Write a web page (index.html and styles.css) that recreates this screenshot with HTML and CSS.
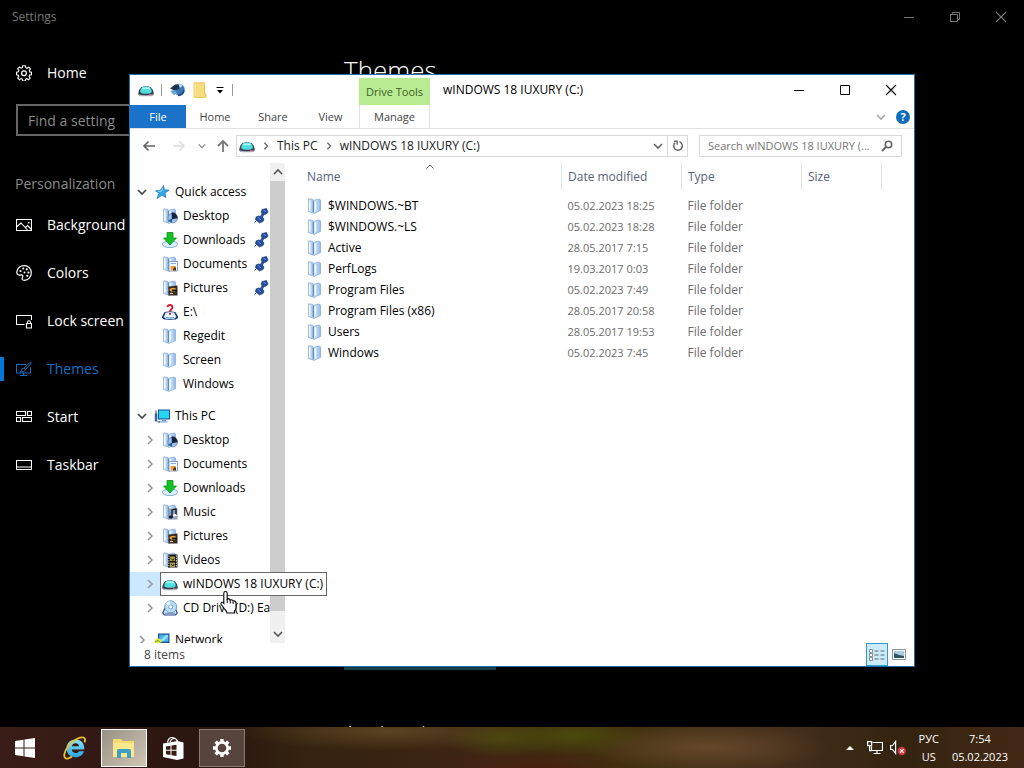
FILE: index.html
```html
<!DOCTYPE html>
<html lang="en">
<head>
  <meta charset="UTF-8" />
  <meta name="viewport" content="width=device-width, initial-scale=1" />
  <title>Settings</title>
  <link rel="stylesheet" href="styles.css">
</head>
<body>
  <!-- Shared icons -->
  <svg class="sprite" aria-hidden="true">
    <defs>
      <linearGradient id="folder-blue" x1="0" x2="1">
        <stop offset="0" stop-color="#e6f3fd" />
        <stop offset="1" stop-color="#8fbbe8" />
      </linearGradient>
      <linearGradient id="ie-blue" x1="0" y1="0" x2="0" y2="1">
        <stop offset="0" stop-color="#8be4fb" />
        <stop offset="1" stop-color="#27a4e0" />
      </linearGradient>
    </defs>
    <symbol id="folder" viewBox="0 0 16 16">
      <path d="M1.500.8l4 .5 1.500 1.500v12.500l-5.500-1.800z" fill="url(#folder-blue)" stroke="#7fa3cc" stroke-width=".7" />
      <path d="M6 2.500L12 1l1.500 1v10.500L7 15.300 6 14z" fill="url(#folder-blue)" stroke="#7ea4d2" stroke-width=".7" />
      <path d="M2.700 2.500v10M8.500 3.500v9" stroke="#fff" stroke-width="1.100" />
      <path d="M6.500 3v11" stroke="#5f8cc4" />
    </symbol>
    <symbol id="folder-desktop" viewBox="0 0 16 16">
      <use href="#folder" width="16" height="16" />
      <circle cx="10.700" cy="10" r="4.800" fill="#9cc4ea" stroke="#4f7db4" stroke-width=".8" />
      <path d="M9.500 4.500a5 5 0 0 1 5.800 5.800l-5.300 1z" fill="#17233d" />
      <path d="M6.500 12.500l3.500-2v4z" fill="#26508c" />
    </symbol>
    <symbol id="folder-docs" viewBox="0 0 16 16">
      <use href="#folder" width="16" height="16" />
      <path d="M7 5.500h8.500v9.500H7z" fill="#fff" stroke="#7d9cc6" stroke-width=".9" />
      <path d="M8.500 7.500h5.500" stroke="#8cadd8" />
      <path d="M8.500 10h5.500v4.500H8.500z" fill="#e8a24a" />
      <path d="M11 14.500l1-3.500 2 1v2.500z" fill="#4a2c1c" />
    </symbol>
    <symbol id="folder-pics" viewBox="0 0 16 16">
      <use href="#folder" width="16" height="16" />
      <path d="M6.500 6.500l9-1v10h-9z" fill="#3a2b20" />
      <path d="M7 10q3-4 7.500-1l-1.500 3h-3z" fill="#e4a43e" />
      <path d="M10 9.500h5v2h-5z" fill="#15100d" />
      <path d="M8 13.500h3" stroke="#f4dfb0" />
    </symbol>
    <symbol id="folder-music" viewBox="0 0 16 16">
      <use href="#folder" width="16" height="16" />
      <path d="M6.500 4.500h9v11h-9z" fill="#8da1bd" />
      <path d="M10 13V6l4-1.200V11" fill="none" stroke="#111a2c" stroke-width="1.300" />
      <ellipse cx="8.800" cy="13" rx="2" ry="1.500" fill="#111a2c" />
      <ellipse cx="12.900" cy="11.200" rx="1.700" ry="1.300" fill="#fff" />
    </symbol>
    <symbol id="folder-video" viewBox="0 0 16 16">
      <use href="#folder" width="16" height="16" />
      <path d="M6 2.500h9.500v13H6z" fill="#16160f" />
      <path d="M8 4.500h5V9H8zM8 10.500h5V15H8z" fill="#a79a52" />
      <path d="M9 6.500l2 2 1-2M9 12l2 2 1-2" stroke="#28301a" fill="none" />
      <path d="M6.900 3.500v12M14.400 3.500v12" stroke="#fff" stroke-width="1" stroke-dasharray="1.200 1.200" />
    </symbol>
    <symbol id="download" viewBox="0 0 16 16">
      <ellipse cx="8" cy="12.300" rx="7.600" ry="3.300" fill="#d8ecfb" stroke="#78a9da" stroke-width=".9" />
      <path d="M5 .5h6v5.500h3.500L8 13 1.500 6H5z" fill="#16c223" stroke="#0a8f1b" stroke-width=".8" />
    </symbol>
    <symbol id="unknown-drive" viewBox="0 0 16 16">
      <path d="M3 8.500Q8 6.500 13 8.500l2.500 4.500q-.5 2.500-7.500 2.500T.5 13z" fill="#e8f2fa" stroke="#33558c" stroke-width=".9" />
      <path d="M3 8.500L.6 13.500 3 15M13 8.500l2.400 5L13 15" fill="none" stroke="#123a86" stroke-width="1.600" />
      <path d="M4 13.500q4 1.300 8 0" fill="none" stroke="#4f8fbd" />
      <path d="M5.500 3.200Q5.800 1 8 1t2.500 2.300C10.500 5.200 8.200 5.300 8 7.600" fill="none" stroke="#d81c30" stroke-width="1.900" />
      <path d="M7 8.800h2v2H7z" fill="#d81c30" />
    </symbol>
    <symbol id="drive" viewBox="0 0 16 16">
      <path d="M3.500 5Q8 3.600 12.500 5q2.500 2 3.200 6v1.500l-2 1.500H2.300l-2-1.500V11Q1 7 3.500 5z" fill="#37424f" />
      <path d="M4 5.200Q8 3.800 12 5.200q1.800 2.300 1.800 5-1.500 1.600-5.800 1.600t-5.800-1.600q0-2.700 1.800-5z" fill="#4fdde0" />
      <path d="M4.600 5.800q3.400-1.200 6.800 0l.8 1.700q-4.200-1-8.400 0z" fill="#a5f6f4" />
      <path d="M.8 12.200q2 1 7.200 1t7.200-1l-1.500 2H2.300z" fill="#b5b0c2" />
      <path d="M11 12.800h2.500" stroke="#e07c80" />
    </symbol>
    <symbol id="cd-drive" viewBox="0 0 16 16">
      <path d="M3 8L.8 13l1.700 2h11l1.700-2L13 8z" fill="#dce7f4" stroke="#2b4c94" stroke-width="1.200" />
      <circle cx="8.700" cy="6.800" r="6" fill="#b8dcf4" stroke="#6796ca" stroke-width=".9" />
      <path d="M8.700 6.800L4 3.500A6 6 0 0 1 8 1z" fill="#edf8ff" />
      <circle cx="8.700" cy="6.800" r="2" fill="#fff" stroke="#6b9bce" stroke-width=".8" />
      <path d="M3 13.300h10" stroke="#6d86b0" />
    </symbol>
    <symbol id="star" viewBox="0 0 16 16">
      <path d="M9.500 1.500l.9 4.300 4.800.4-4.200 2.600.8 4.700-3.800-2.500L3 14.500l2-5.200-3.500-2.500 5-.6z" fill="#38a7e8" stroke="#1d7cc0" stroke-width=".8" />
      <path d="M8.600 4l-.8 3-3.800.3" fill="none" stroke="#9bd8f8" />
    </symbol>
    <symbol id="this-pc" viewBox="0 0 16 16">
      <path d="M4 1.500h12v10H4z" fill="#1b4d9b" />
      <path d="M5 2.500h10v8H5z" fill="#25d5f2" />
      <path d="M8 11.500h4v2H8z" fill="#6da4d2" />
      <path d="M5 13.900h8.500" stroke="#8fb4d9" stroke-width="1.400" />
      <path d="M.8 5.500h2.500v8H.8z" fill="#2e63ae" />
      <path d="M2 2.500v4M3.500 14h2.500" stroke="#203d79" />
    </symbol>
    <symbol id="network" viewBox="0 0 16 16">
      <path d="M4 1.500h11.500v9.500H4z" fill="#1c4e99" />
      <path d="M5.200 2.700h9.200v7H5.200z" fill="#45b8e8" />
      <path d="M6 8.500l6-5.500h2v2l-5 4.500z" fill="#91e1f8" />
      <path d="M8 11h4v3H8z" fill="#7396ba" />
      <circle cx="4" cy="10" r="3.500" fill="#e9e531" />
      <path d="M1 10q3-3 6 1" fill="none" stroke="#58a646" />
    </symbol>
    <symbol id="pin" viewBox="0 0 16 16">
      <path d="M9 1.500l4.500-1 1.500 3.500-1.500 2-2.500.5-1.500 2.500 1.500 2-1 2.500-3.500 1.500L2.500 11.500 3 9l2.500-1 2 .3L9 6l-.8-2z" fill="#214f9f" stroke="#17346f" stroke-width=".6" />
      <path d="M10.500 2.500l2.500 1M5 9.500l3 2.500" stroke="#6f9cde" />
      <path d="M4 12l-2.500 2.500" stroke="#33477a" />
    </symbol>
    <symbol id="chev" viewBox="0 0 10 10">
      <path d="M3 1l4 4-4 4" fill="none" stroke="currentColor" stroke-width="1.600" />
    </symbol>
    <symbol id="chev-down" viewBox="0 0 10 10">
      <path d="M1 3l4 4 4-4" fill="none" stroke="currentColor" stroke-width="1.600" />
    </symbol>
    <symbol id="min" viewBox="0 0 12 12"><path d="M1 6.500h10" stroke="currentColor" /></symbol>
    <symbol id="close" viewBox="0 0 12 12"><path d="M1 1l10 10M11 1L1 11" stroke="currentColor" stroke-width="1.100" /></symbol>
  </svg>

  <div class="desktop">
    <!-- Settings app -->
    <section class="settings" aria-label="Settings">
      <header class="settings-bar">
        <span>Settings</span>
        <div class="win-controls">
          <button type="button" aria-label="Minimize"><svg class="i12"><use href="#min" /></svg></button>
          <button type="button" aria-label="Restore"><svg class="i12" viewBox="0 0 12 12"><path d="M1.500 3.500h7v7h-7zM3.500 3V1.500h7v7H9" fill="none" stroke="currentColor" /></svg></button>
          <button type="button" aria-label="Close"><svg class="i12"><use href="#close" /></svg></button>
        </div>
      </header>
      <div class="settings-body">
        <nav class="settings-nav">
          <a href="#" class="nav-link">
            <svg class="i16" viewBox="0 0 16 16"><path d="M6.700.7h2.600l.4 2 1.300.6 1.800-1.200 1.600 1.800-1.100 1.700.5 1.300 1.700.3v2.500l-1.900.4-.5 1.300 1.100 1.700-1.800 1.600-1.600-1-1.200.5-.3 1.800H6.700l-.4-1.900-1.200-.5-1.700 1.100-1.700-1.700 1.100-1.700-.5-1.200-1.800-.4V7.100l1.900-.4.5-1.300-1.200-1.700 1.800-1.700 1.600 1.200 1.300-.5z" fill="none" stroke="currentColor" stroke-width="1.100" /><circle cx="8" cy="8.200" r="2.400" fill="none" stroke="currentColor" stroke-width="1.200" /></svg>
            Home
          </a>
          <input class="find" type="text" placeholder="Find a setting" aria-label="Find a setting" />
          <h2>Personalization</h2>
          <a href="#" class="nav-link">
            <svg class="i16" viewBox="0 0 16 16"><path d="M.5 2.500h15v11H.5zM.5 10l4.500-4 6.500 7M9.500 10.500l2-2 4 4" fill="none" stroke="currentColor" stroke-width="1.100" /><path d="M12 5h1.500v1.500H12z" fill="currentColor" /></svg>
            Background
          </a>
          <a href="#" class="nav-link">
            <svg class="i16" viewBox="0 0 16 16"><path d="M.8 7C1.500 3 4.500.6 8.300.6c4 0 7 3 7 7.200 0 4.300-3 7.500-7 7.500-2 0-2.600-1.300-1.900-2.700.9-1.800.2-3-1.300-2.700-2 .4-4.700.2-4.300-2.900z" fill="none" stroke="currentColor" stroke-width="1.200" /><g fill="currentColor"><circle cx="4.500" cy="6" r="1.100" /><circle cx="7.300" cy="3.500" r="1.100" /><circle cx="10.800" cy="4.300" r="1.100" /><circle cx="12.500" cy="7.500" r="1.100" /><circle cx="11.300" cy="10.800" r="1.100" /><circle cx="8.500" cy="7.500" r="1" /></g></svg>
            Colors
          </a>
          <a href="#" class="nav-link">
            <svg class="i16" viewBox="0 0 16 16"><path d="M8.500 11.500h-8v-9h15V7M10.500 10.500h5v4.500h-5zM11.500 10.500V9.300q0-1.600 1.500-1.600t1.500 1.600v1.200" fill="none" stroke="currentColor" stroke-width="1.100" /></svg>
            Lock screen
          </a>
          <a href="#" class="nav-link current" aria-current="page">
            <svg class="i16" viewBox="0 0 16 16"><path d="M10 3.500H.5v8.500h14V6.500M7.500 12v2.500M4 14.500h7" fill="none" stroke="currentColor" stroke-width="1.100" /><path d="M14.500 1l.9.9L9.500 8.500 8 7.300zM8 7.300q-2.400-.3-2.300 2Q5.500 10.500 4 10.500q4 1.300 5.500-2" fill="none" stroke="currentColor" /></svg>
            Themes
          </a>
          <a href="#" class="nav-link">
            <svg class="i16" viewBox="0 0 16 16"><path d="M.5 2.500h9v4h-9zM11.500 2.500h4v4h-4zM.5 8.500h4v4h-4zM6.500 8.500h9v4h-9z" fill="none" stroke="currentColor" stroke-width="1.100" /></svg>
            Start
          </a>
          <a href="#" class="nav-link">
            <svg class="i16" viewBox="0 0 16 16"><path d="M.5 3.500h15v9H.5zM.5 10h15" fill="none" stroke="currentColor" stroke-width="1.100" /></svg>
            Taskbar
          </a>
        </nav>
        <main class="settings-main">
          <h1>Themes</h1>
          <div class="theme-preview"></div>
          <h2>Apply a theme</h2>
        </main>
      </div>
    </section>

    <!-- File Explorer window -->
    <section class="explorer" aria-label="File Explorer">
      <header class="title-row">
        <div class="quick-bar">
          <svg class="i16"><use href="#drive" /></svg>
          <span class="sep"></span>
          <button type="button" aria-label="Properties"><svg class="i16" viewBox="0 0 16 16"><circle cx="10" cy="7.500" r="5.700" fill="#3a78b8" /><path d="M1 6.500L6 2.500l5 .5-1 4-4.500 1.500z" fill="#1c3350" /><path d="M1.500 9.500q2.500-2.500 5.500-.5l1 2.500-3 1.500z" fill="#68a8de" /><path d="M9.500 2.500q3-1 4 1L11 6z" fill="#c4e6f8" /><path d="M9 13.500q5-.5 6-5" fill="none" stroke="#16437e" stroke-width="1.500" /></svg></button>
          <button type="button" aria-label="New folder"><svg class="i16" viewBox="0 0 16 16"><path d="M2 .8h10.500v11H14v3.700H2z" fill="#f9dc7e" stroke="#e8bf50" stroke-width=".8" /><path d="M3.200 2v12" stroke="#fff0b4" /><path d="M12.500 4v8" stroke="#e9bd50" /></svg></button>
          <button type="button" aria-label="Customize toolbar"><svg class="i10" viewBox="0 0 10 10"><path d="M1.500 2.500h7" stroke="#000" /><path d="M2 5h6L5 8.500z" /></svg></button>
          <span class="sep"></span>
        </div>
        <div class="drive-tools">Drive Tools</div>
        <div class="window-title">wINDOWS 18 IUXURY (C:)</div>
        <div class="win-controls">
          <button type="button" aria-label="Minimize"><svg class="i12"><use href="#min" /></svg></button>
          <button type="button" aria-label="Maximize"><svg class="i12" viewBox="0 0 12 12"><path d="M1.500 1.500h9v9h-9z" fill="none" stroke="currentColor" /></svg></button>
          <button type="button" aria-label="Close"><svg class="i12"><use href="#close" /></svg></button>
        </div>
      </header>

      <div class="tab-row">
        <button type="button" class="file-tab">File</button>
        <button type="button">Home</button>
        <button type="button">Share</button>
        <button type="button">View</button>
        <button type="button" class="manage-tab">Manage</button>
        <div class="tab-end">
          <svg class="i10"><use href="#chev-down" /></svg>
          <button type="button" class="help" aria-label="Help">?</button>
        </div>
      </div>

      <div class="address-row">
        <div class="arrows">
          <button type="button" aria-label="Back"><svg class="i14" viewBox="0 0 14 14"><path d="M13 7H2M6.500 2.500L2 7l4.500 4.500" fill="none" stroke="#666" stroke-width="1.700" /></svg></button>
          <button type="button" aria-label="Forward"><svg class="i14" viewBox="0 0 14 14"><path d="M1 7h11M7.500 2.500L12 7l-4.500 4.500" fill="none" stroke="#dcdcdc" stroke-width="1.500" /></svg></button>
          <button type="button" aria-label="Recent locations"><svg class="i8"><use href="#chev-down" /></svg></button>
          <button type="button" aria-label="Up"><svg class="i14" viewBox="0 0 14 14"><path d="M7 13V2M2 7l5-5 5 5" fill="none" stroke="#777" stroke-width="1.800" /></svg></button>
        </div>
        <div class="address">
          <svg class="i16"><use href="#drive" /></svg>
          <svg class="i8"><use href="#chev" /></svg>
          <a href="#">This PC</a>
          <svg class="i8"><use href="#chev" /></svg>
          <a href="#">wINDOWS 18 IUXURY (C:)</a>
          <button type="button" class="drop" aria-label="Previous locations"><svg class="i10"><use href="#chev-down" /></svg></button>
          <button type="button" class="refresh" aria-label="Refresh"><svg class="i12" viewBox="0 0 12 12"><path d="M3 2.800A4.300 4.300 0 1 0 9 2.800L7.500 1.500" fill="none" stroke="#666" stroke-width="1.500" /><path d="M2 1.200h3.200v3.500" fill="none" stroke="#666" stroke-width="1.400" /></svg></button>
        </div>
        <label class="search">
          <input type="text" placeholder="Search wINDOWS 18 IUXURY (..." aria-label="Search" />
          <svg class="i12" viewBox="0 0 12 12"><circle cx="7.500" cy="4.500" r="3.200" fill="none" stroke="#666" stroke-width="1.600" /><path d="M5 7L1 11" stroke="#666" stroke-width="2" /></svg>
        </label>
      </div>

      <div class="explorer-body">
        <nav class="tree">
          <ul>
            <li class="root"><svg class="i10 open"><use href="#chev-down" /></svg><svg class="i16"><use href="#star" /></svg><a href="#">Quick access</a></li>
            <li><svg class="i16"><use href="#folder-desktop" /></svg><a href="#">Desktop</a><svg class="i16 pin"><use href="#pin" /></svg></li>
            <li><svg class="i16"><use href="#download" /></svg><a href="#">Downloads</a><svg class="i16 pin"><use href="#pin" /></svg></li>
            <li><svg class="i16"><use href="#folder-docs" /></svg><a href="#">Documents</a><svg class="i16 pin"><use href="#pin" /></svg></li>
            <li><svg class="i16"><use href="#folder-pics" /></svg><a href="#">Pictures</a><svg class="i16 pin"><use href="#pin" /></svg></li>
            <li><svg class="i16"><use href="#unknown-drive" /></svg><a href="#">E:\</a></li>
            <li><svg class="i16"><use href="#folder" /></svg><a href="#">Regedit</a></li>
            <li><svg class="i16"><use href="#folder" /></svg><a href="#">Screen</a></li>
            <li><svg class="i16"><use href="#folder" /></svg><a href="#">Windows</a></li>
          </ul>
          <ul>
            <li class="root"><svg class="i10 open"><use href="#chev-down" /></svg><svg class="i16"><use href="#this-pc" /></svg><a href="#">This PC</a></li>
            <li class="sub"><svg class="i10"><use href="#chev" /></svg><svg class="i16"><use href="#folder-desktop" /></svg><a href="#">Desktop</a></li>
            <li class="sub"><svg class="i10"><use href="#chev" /></svg><svg class="i16"><use href="#folder-docs" /></svg><a href="#">Documents</a></li>
            <li class="sub"><svg class="i10"><use href="#chev" /></svg><svg class="i16"><use href="#download" /></svg><a href="#">Downloads</a></li>
            <li class="sub"><svg class="i10"><use href="#chev" /></svg><svg class="i16"><use href="#folder-music" /></svg><a href="#">Music</a></li>
            <li class="sub"><svg class="i10"><use href="#chev" /></svg><svg class="i16"><use href="#folder-pics" /></svg><a href="#">Pictures</a></li>
            <li class="sub"><svg class="i10"><use href="#chev" /></svg><svg class="i16"><use href="#folder-video" /></svg><a href="#">Videos</a></li>
            <li class="sub hovered">
              <svg class="i10"><use href="#chev" /></svg>
              <div class="full-name">
                <svg class="i16"><use href="#drive" /></svg><a href="#">wINDOWS 18 IUXURY (C:)</a>
                <svg class="pointer" viewBox="0 0 18 24"><path d="M5.500 1.500q1.700 0 1.700 1.700v6q2.300-1 3 .8 2.200-.7 2.900 1 2.700-.5 2.900 1.800v4.700q0 2-1.500 3.500v2H7q-.5-2.200-2.500-4.200L1.200 14.500q-.7-1.700.7-2.200 1.200-.2 1.900 1V3.200q0-1.700 1.700-1.700z" fill="#fff" stroke="#000" stroke-width="1.100" /><path d="M7.200 9v4M10.200 10v3.500M13.100 11.500V14" stroke="#000" /></svg>
              </div>
            </li>
            <li class="sub"><svg class="i10"><use href="#chev" /></svg><svg class="i16"><use href="#cd-drive" /></svg><a href="#">CD Drive (D:) Easy</a></li>
          </ul>
          <ul>
            <li class="root"><svg class="i10"><use href="#chev" /></svg><svg class="i16"><use href="#network" /></svg><a href="#">Network</a></li>
          </ul>
        </nav>
        <div class="scrollbar">
          <button type="button" aria-label="Scroll up"><svg class="i10 up"><use href="#chev-down" /></svg></button>
          <div class="thumb"></div>
          <button type="button" aria-label="Scroll down"><svg class="i10"><use href="#chev-down" /></svg></button>
        </div>
        <div class="files">
          <table>
            <thead>
              <tr>
                <th class="col-name">Name<svg class="i8 sort" viewBox="0 0 8 8"><path d="M.5 5.500L4 2l3.500 3.500" fill="none" stroke="#555" /></svg></th>
                <th class="col-date">Date modified</th>
                <th class="col-type">Type</th>
                <th class="col-size">Size</th>
              </tr>
            </thead>
            <tbody>
              <tr><td><svg class="i16"><use href="#folder" /></svg>$WINDOWS.~BT</td><td class="date">05.02.2023 18:25</td><td>File folder</td><td></td></tr>
              <tr><td><svg class="i16"><use href="#folder" /></svg>$WINDOWS.~LS</td><td class="date">05.02.2023 18:28</td><td>File folder</td><td></td></tr>
              <tr><td><svg class="i16"><use href="#folder" /></svg>Active</td><td class="date">28.05.2017 7:15</td><td>File folder</td><td></td></tr>
              <tr><td><svg class="i16"><use href="#folder" /></svg>PerfLogs</td><td class="date">19.03.2017 0:03</td><td>File folder</td><td></td></tr>
              <tr><td><svg class="i16"><use href="#folder" /></svg>Program Files</td><td class="date">05.02.2023 7:49</td><td>File folder</td><td></td></tr>
              <tr><td><svg class="i16"><use href="#folder" /></svg>Program Files (x86)</td><td class="date">28.05.2017 20:58</td><td>File folder</td><td></td></tr>
              <tr><td><svg class="i16"><use href="#folder" /></svg>Users</td><td class="date">28.05.2017 19:53</td><td>File folder</td><td></td></tr>
              <tr><td><svg class="i16"><use href="#folder" /></svg>Windows</td><td class="date">05.02.2023 7:45</td><td>File folder</td><td></td></tr>
            </tbody>
          </table>
        </div>
      </div>

      <footer class="status">
        <span>8 items</span>
        <div class="views">
          <button type="button" class="on" aria-label="Details view"><svg class="i16" viewBox="0 0 16 16"><path d="M.5 2.500h3v3h-3zM.5 6.500h3v3h-3zM.5 10.500h3v3h-3z" fill="#fff" stroke="#7a8792" stroke-width=".9" /><path d="M5.500 4h4M11.500 4h4M5.500 8h4M11.500 8h4M5.500 12h4M11.500 12h4" stroke="#5d6b77" /></svg></button>
          <button type="button" aria-label="Large icons view"><svg class="i16" viewBox="0 0 16 16"><path d="M1.500 2.500h13v10h-13z" fill="#fff" stroke="#8496a4" /><path d="M3 4h10v7H3z" fill="#a9cbe3" /><path d="M3 6l5 2 5 1v2H3z" fill="#2f5561" /></svg></button>
        </div>
      </footer>
    </section>
  </div>

  <!-- Taskbar -->
  <footer class="taskbar">
    <div class="apps">
      <button type="button" aria-label="Start"><svg class="i22" viewBox="0 0 22 22"><path d="M1 4l8.500-1.200v7.700H1zM10.500 2.600L21 1v9.500H10.500zM1 11.500h8.500v7.700L1 18zM10.500 11.500H21V21l-10.500-1.500z" fill="#fff" /></svg></button>
      <button type="button" aria-label="Internet Explorer"><svg class="i24" viewBox="0 0 24 24"><path d="M12.500 3.500c-5.200 0-9 3.800-9 8.700 0 5.200 3.700 9 9 9 4.200 0 7.400-2.300 8.500-6h-5c-.7 1.200-1.800 1.900-3.300 1.900-2.200 0-3.800-1.400-3.900-3.600h12.500c.5-6-3.200-10-8.800-10zM8.900 10.300c.4-1.900 1.800-3 3.700-3s3.200 1.100 3.500 3z" fill="url(#ie-blue)" /><path d="M21.500 6.500c.9-2.800.6-4.500-1-5C16.500.5 9 5 5 10.500 1 16 0 21.500 3 22.500c1.500.5 3.800-.5 6-2" fill="none" stroke="#eac22d" stroke-width="1.800" /></svg></button>
      <button type="button" class="active" aria-label="File Explorer"><svg class="i24" viewBox="0 0 24 24"><path d="M1 3h8l2 2h11v16H1z" fill="#f2dc6d" /><path d="M1 7h21v14H1z" fill="#f9e98c" /><path d="M5 15q0-2 2-2h10q2 0 2 2v7h-4v-5H9v5H5z" fill="#3d9fc4" /></svg></button>
      <button type="button" aria-label="Store"><svg class="i24" viewBox="0 0 24 24"><path d="M6.500 6.500Q7.500 1.500 11 1.500T16 5M9 6q1.500-3.500 4-3.500T16.500 5" fill="none" stroke="#fff" stroke-width="1.200" /><path d="M2 7.500L16.500 5 22.500 6.500v16L16 24 2 21z" fill="#fff" /><path d="M5 10.500l4.500-.7v4H5zM10.500 9.600l5-.8v5h-5zM5 14.800h4.500v4.200L5 18.300zM10.500 14.800h5v5.200l-5-.8z" fill="#351c15" /></svg></button>
      <button type="button" class="running" aria-label="Settings"><svg class="i20" viewBox="0 0 20 20"><circle cx="10" cy="10" r="5.600" fill="none" stroke="#fff" stroke-width="2.600" /><path d="M10 1v3M10 16v3M1 10h3M16 10h3M3.600 3.600l2.200 2.200M14.200 14.200l2.200 2.200M16.400 3.600l-2.200 2.200M5.800 14.200l-2.200 2.200" stroke="#fff" stroke-width="3.400" /></svg></button>
    </div>
    <div class="tray">
      <button type="button" aria-label="Show hidden icons"><svg class="i8" viewBox="0 0 8 8"><path d="M0 6l4-4 4 4z" fill="#fff" /></svg></button>
      <button type="button" aria-label="Network"><svg class="i16" viewBox="0 0 16 16"><path d="M5.500 2.500h10v8h-11v-4M10 10.500v3M6.500 13.500h7" fill="none" stroke="#fff" stroke-width="1.200" /><path d="M.6 1.600h4v4h-4zM2.600 5.600v5h2" fill="none" stroke="#fff" stroke-width="1.200" /></svg></button>
      <button type="button" aria-label="Volume muted"><svg class="i16" viewBox="0 0 16 16"><path d="M.6 5.500h2l3-4v12l-3-4h-2z" fill="none" stroke="#fff" stroke-width="1.200" /><circle cx="11.800" cy="11" r="4.200" fill="#d5333d" /><path d="M10 9.200l3.600 3.600M13.600 9.200L10 12.800" stroke="#fff" stroke-width="1.200" /></svg></button>
      <div class="lang"><span>РУС</span><span>US</span></div>
      <div class="clock"><span>7:54</span><span>05.02.2023</span></div>
    </div>
  </footer>
</body>
</html>
```

FILE: styles.css
```css
* {
  box-sizing: border-box;
}
body {
  margin: 0;
  height: 100vh;
  display: flex;
  flex-direction: column;
  font-family: 'Segoe UI', 'Open Sans', 'Noto Sans', sans-serif;
  font-size: 12px;
  line-height: 16px;
  background: #000;
  color: #000;
  overflow: hidden;
}
button {
  display: flex;
  align-items: center;
  justify-content: center;
  padding: 0;
  border: none;
  background: none;
  font: inherit;
  color: inherit;
}
input {
  font: inherit;
}
a {
  color: inherit;
  text-decoration: none;
}
ul {
  list-style: none;
  margin: 0;
  padding: 0;
}
h1, h2 {
  margin: 0;
  font-weight: 400;
}
svg {
  flex: none;
}
.sprite {
  position: absolute;
  width: 0;
  height: 0;
}
.i8  { width: 8px;  height: 8px; }
.i10 { width: 10px; height: 10px; }
.i12 { width: 12px; height: 12px; }
.i14 { width: 14px; height: 14px; }
.i16 { width: 16px; height: 16px; }
.i20 { width: 20px; height: 20px; }
.i22 { width: 22px; height: 22px; }
.i24 { width: 24px; height: 24px; }

.desktop {
  position: relative;
  flex: 1;
  min-height: 0;
  display: flex;
}
.win-controls {
  display: flex;
}
.win-controls button {
  width: 46px;
  height: 30px;
}

/* Settings */
.settings {
  flex: 1;
  display: flex;
  flex-direction: column;
  overflow: hidden;
  color: #fff;
}
.settings-bar {
  flex: none;
  display: flex;
  align-items: center;
  justify-content: space-between;
  height: 33px;
  padding-left: 12px;
  color: #777;
}
.settings-body {
  display: flex;
}
.settings-nav {
  width: 344px;
  padding-top: 16px;
  font-size: 14px;
}
.nav-link {
  display: flex;
  align-items: center;
  gap: 15px;
  height: 48px;
  padding-left: 16px;
}
.nav-link.current {
  padding-left: 0;
  color: #1570c4;
}
.nav-link.current::before {
  content: "";
  width: 4px;
  height: 24px;
  margin-right: -3px;
  background: #0078d7;
}
.find {
  display: block;
  width: 312px;
  height: 32px;
  margin: 7px 16px 0;
  padding: 0 10px;
  border: 2px solid #666;
  background: #000;
  color: #fff;
}
.find::placeholder {
  color: #8a8a8a;
  opacity: 1;
}
.settings-nav h2 {
  padding: 36px 15px 5px;
  font-size: 14px;
  line-height: 24px;
  color: #8a8a8a;
}
.settings-main {
  flex: 1;
}
.settings-main h1 {
  padding-top: 21px;
  font-size: 26px;
  font-weight: 300;
  line-height: 32px;
}
.theme-preview {
  width: 152px;
  height: 556px;
  margin-top: 28px;
  background: #193d44;
}
.settings-main h2 {
  padding-top: 50px;
  font-size: 20px;
  font-weight: 300;
  line-height: 28px;
}

/* Explorer window */
.explorer {
  position: absolute;
  top: 74px;
  right: 109px;
  bottom: 60px;
  left: 129px;
  display: flex;
  flex-direction: column;
  border: 1px solid #1a72b0;
  background: #fff;
}
.title-row {
  display: flex;
  height: 30px;
}
.quick-bar {
  display: flex;
  align-items: center;
  gap: 7px;
  width: 229px;
  padding-left: 8px;
}
.sep {
  width: 1px;
  height: 12px;
  background: #999;
}
.drive-tools {
  width: 71px;
  margin-top: 3px;
  background: #b9ec92;
  color: #3c5c28;
  font-size: 11px;
  line-height: 27px;
  text-align: center;
}
.window-title {
  flex: 1;
  padding-left: 13px;
  line-height: 30px;
}
.tab-row {
  display: grid;
  grid-template-columns: 56px 58px 58px 57px 71px 1fr;
  height: 24px;
  border-bottom: 1px solid #e2e2e2;
  font-size: 11px;
  color: #444;
}
.tab-row .file-tab {
  background: #1a73c9;
  color: #fff;
}
.tab-row .manage-tab {
  border: solid #e2e2e2;
  border-width: 0 1px;
}
.tab-end {
  display: flex;
  align-items: center;
  justify-content: flex-end;
  gap: 10px;
  padding-right: 4px;
  color: #aaa;
}
.tab-end .help {
  width: 14px;
  height: 14px;
  border-radius: 50%;
  background: #0f6cbd;
  color: #fff;
  font-weight: 700;
}
.address-row {
  display: flex;
  align-items: center;
  height: 34px;
  padding-right: 12px;
}
.arrows {
  display: grid;
  grid-template-columns: 38px 22px 24px 18px;
  padding-right: 4px;
  color: #888;
}
.address,
.search {
  display: flex;
  align-items: center;
  height: 22px;
  border: 1px solid #d9d9d9;
}
.address {
  flex: 1;
  gap: 7px;
  padding-left: 2px;
  color: #222;
}
.address > svg {
  color: #666;
}
.address .drop {
  margin-left: auto;
  color: #666;
}
.address .refresh {
  width: 20px;
  height: 20px;
  margin-left: -3px;
  border-left: 1px solid #d9d9d9;
}
.search {
  width: 203px;
  margin-left: 11px;
  padding: 0 8px;
  font-size: 11px;
}
.search input {
  flex: 1;
  min-width: 0;
  padding: 0;
  border: none;
  outline: none;
}
.search input::placeholder {
  color: #777;
  opacity: 1;
}

.explorer-body {
  flex: 1;
  display: flex;
  min-height: 0;
}
.tree {
  width: 140px;
  padding-top: 17px;
  overflow: hidden;
}
.tree ul + ul {
  margin-top: 8px;
}
.tree li {
  display: flex;
  align-items: center;
  height: 24px;
  padding-left: 32px;
  white-space: nowrap;
}
.tree li a {
  padding-left: 5px;
}
.tree .root {
  padding-left: 7px;
}
.tree .root .i10 {
  margin-right: 7px;
}
.tree .sub {
  padding-left: 15px;
}
.tree .sub > .i10 {
  margin-right: 7px;
}
.tree .i10 {
  color: #999;
}
.tree .open {
  color: #444;
}
.tree .pin {
  margin-left: auto;
  margin-right: 1px;
}
.tree .hovered {
  background: #cce8ff;
}
/* full label shown over the scrollbar while the row is hovered */
.full-name {
  position: absolute;
  z-index: 2;
  display: flex;
  align-items: center;
  height: 24px;
  margin-left: 15px;
  padding: 0 3px 0 1px;
  border: 1px solid #666;
  background: #fff;
}
.pointer {
  position: absolute;
  top: 17px;
  left: 59px;
  width: 18px;
  height: 24px;
}
.scrollbar {
  display: flex;
  flex-direction: column;
  width: 15px;
  background: #f0f0f0;
  color: #555;
}
.scrollbar button {
  height: 18px;
}
.scrollbar .thumb {
  flex: 1;
  margin-bottom: 14px;
  background: #cdcdcd;
}
.up {
  transform: rotate(180deg);
}
.files {
  flex: 1;
  padding-left: 16px;
}
.files table {
  table-layout: fixed;
  width: 581px;
  border-collapse: collapse;
}
.files th {
  position: relative;
  height: 27px;
  padding: 0 6px;
  border-right: 1px solid #e4e4e4;
  font-weight: 400;
  text-align: left;
  color: #56617a;
}
.col-date,
.col-type {
  width: 120px;
}
.col-size {
  width: 80px;
}
.sort {
  position: absolute;
  top: 0;
  left: 48%;
}
.files tbody::before {
  content: "";
  display: block;
  height: 5px;
}
.files td {
  height: 21px;
  padding: 0 6px;
  color: #6d6d6d;
}
.files td:first-child {
  color: #000;
}
.files .date {
  font-size: 11px;
}
.files td svg {
  margin-right: 5px;
  vertical-align: -4px;
}
.status {
  display: flex;
  align-items: center;
  justify-content: space-between;
  height: 23px;
  padding: 0 4px 0 14px;
  color: #444;
}
.views {
  display: flex;
}
.views button {
  width: 22px;
  height: 23px;
}
.views .on {
  border: 1px solid #2d9ccb;
  background: #cdeaf8;
}

/* Taskbar */
.taskbar {
  position: relative;
  display: flex;
  justify-content: space-between;
  height: 41px;
  color: #fff;
  background:
    radial-gradient(ellipse 70px 20px at 56% 20%, #4b4b0c, transparent),
    radial-gradient(ellipse 60px 20px at 49% 25%, #4d4710, transparent),
    radial-gradient(ellipse 150px 20px at 38% 10%, #5a4322, transparent),
    radial-gradient(ellipse 120px 24px at 69% 50%, #65482b, transparent),
    radial-gradient(ellipse 100px 20px at 52% 100%, #48200f, transparent),
    linear-gradient(90deg, #3b1d17, #2a150f 20%, #34230f 30%, #3c2413 45%, #41300f 60%, #46301b 75%, #33240f 88%, #432815);
}
.apps {
  display: flex;
  gap: 3px;
  padding-top: 2px;
}
.apps button {
  width: 46px;
  height: 38px;
}
.apps button:first-child {
  width: 49px;
}
.apps .active {
  border: 1px solid #fff;
  background: linear-gradient(135deg, #999186, #cfc5b4);
}
.apps .running {
  border: 1px solid #8b7a72;
  background: #57443d;
}
.tray {
  display: flex;
  align-items: center;
  gap: 13px;
  padding-right: 16px;
}
.tray button:nth-child(3) {
  margin-left: -6px;
}
.lang,
.clock {
  display: flex;
  flex-direction: column;
  font-size: 11px;
  line-height: 18px;
  text-align: center;
}
```
